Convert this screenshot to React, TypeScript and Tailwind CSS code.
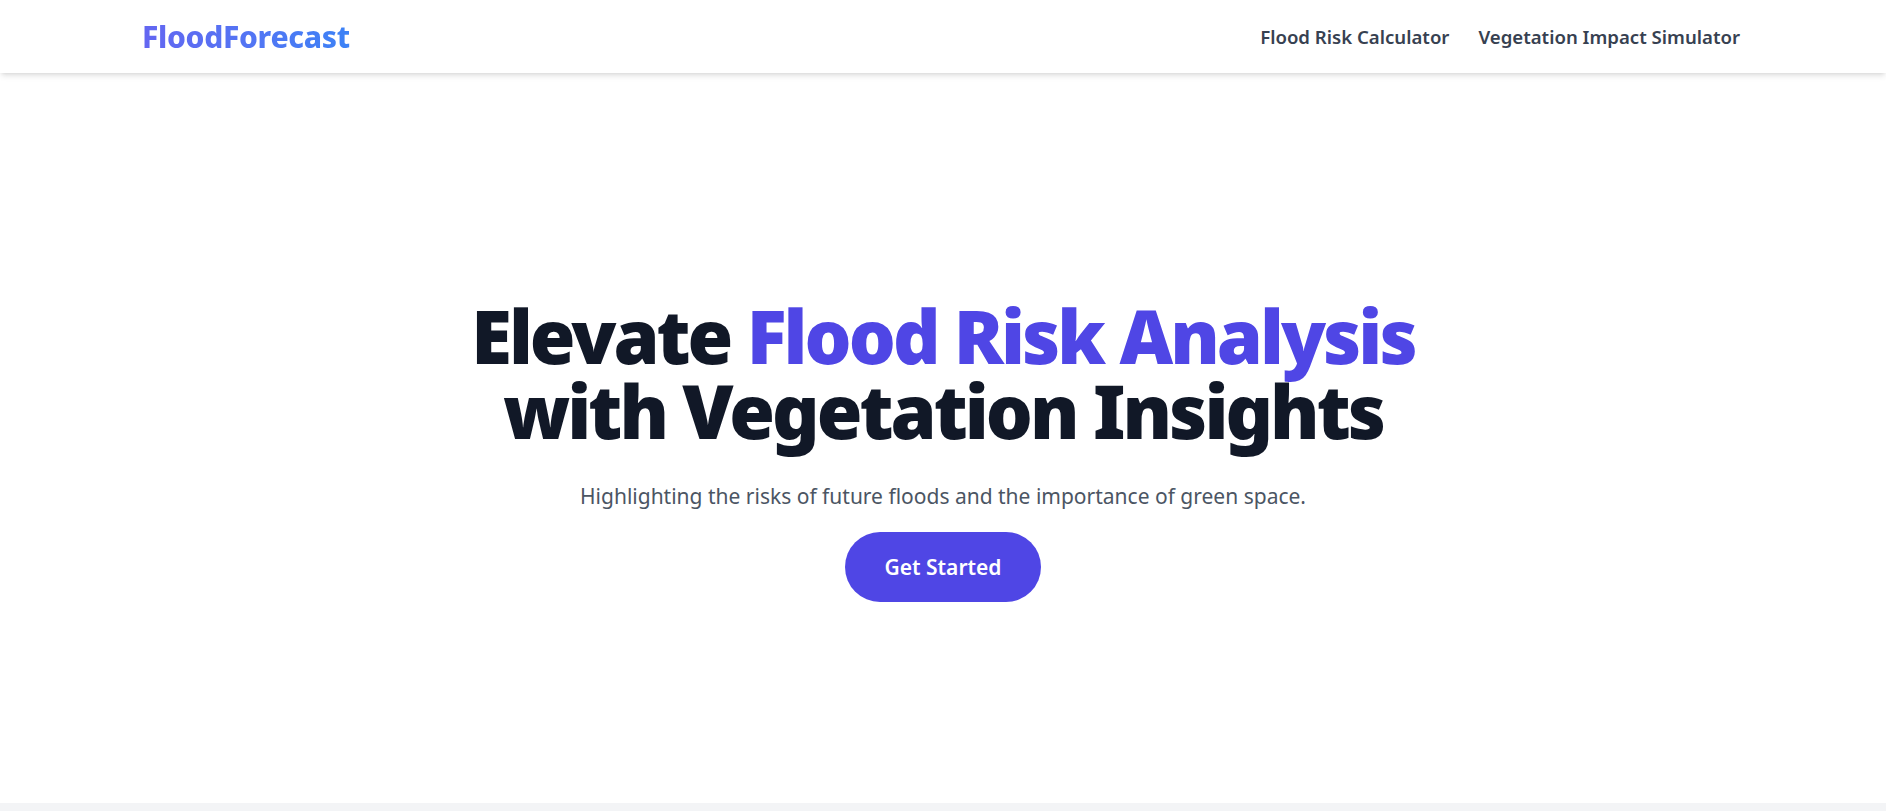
import React from 'react'

const Header = () => {
  return (
    <header className="bg-white shadow-md relative z-10">
      <div className="h-[73px] px-[142px] flex items-center justify-between">
        <a className="text-[30px] font-extrabold bg-gradient-to-r from-[#6366f1] to-[#3b82f6] bg-clip-text text-transparent tracking-[-0.01em]">
          FloodForecast
        </a>
        <nav className="flex items-center gap-[29px] text-[18.6px] font-semibold text-[#374151] pr-[4px]">
          <a className="cursor-pointer">Flood Risk Calculator</a>
          <a className="cursor-pointer">Vegetation Impact Simulator</a>
        </nav>
      </div>
    </header>
  )
}

const Hero = () => {
  return (
    <section className="h-[90vh] bg-white flex flex-col items-center justify-center text-center pt-[24px]">
      <h1 className="text-[74px] leading-[75px] font-black text-[#111827] tracking-[-0.04em]">
        Elevate <span className="text-[#4f46e5]">Flood Risk Analysis</span>
        <br />
        with Vegetation Insights
      </h1>
      <p className="mt-[34px] text-[21px] leading-7 text-[#4b5563]">
        Highlighting the risks of future floods and the importance of green space.
      </p>
      <button className="mt-[22px] px-10 py-[21px] rounded-full bg-[#4f46e5] text-white text-[21px] font-semibold leading-7">
        Get Started
      </button>
    </section>
  )
}

const App = () => {
  return (
    <div className="min-h-screen bg-[#f3f4f6] font-['Noto_Sans',sans-serif]">
      <Header />
      <Hero />
    </div>
  )
}

export default App
